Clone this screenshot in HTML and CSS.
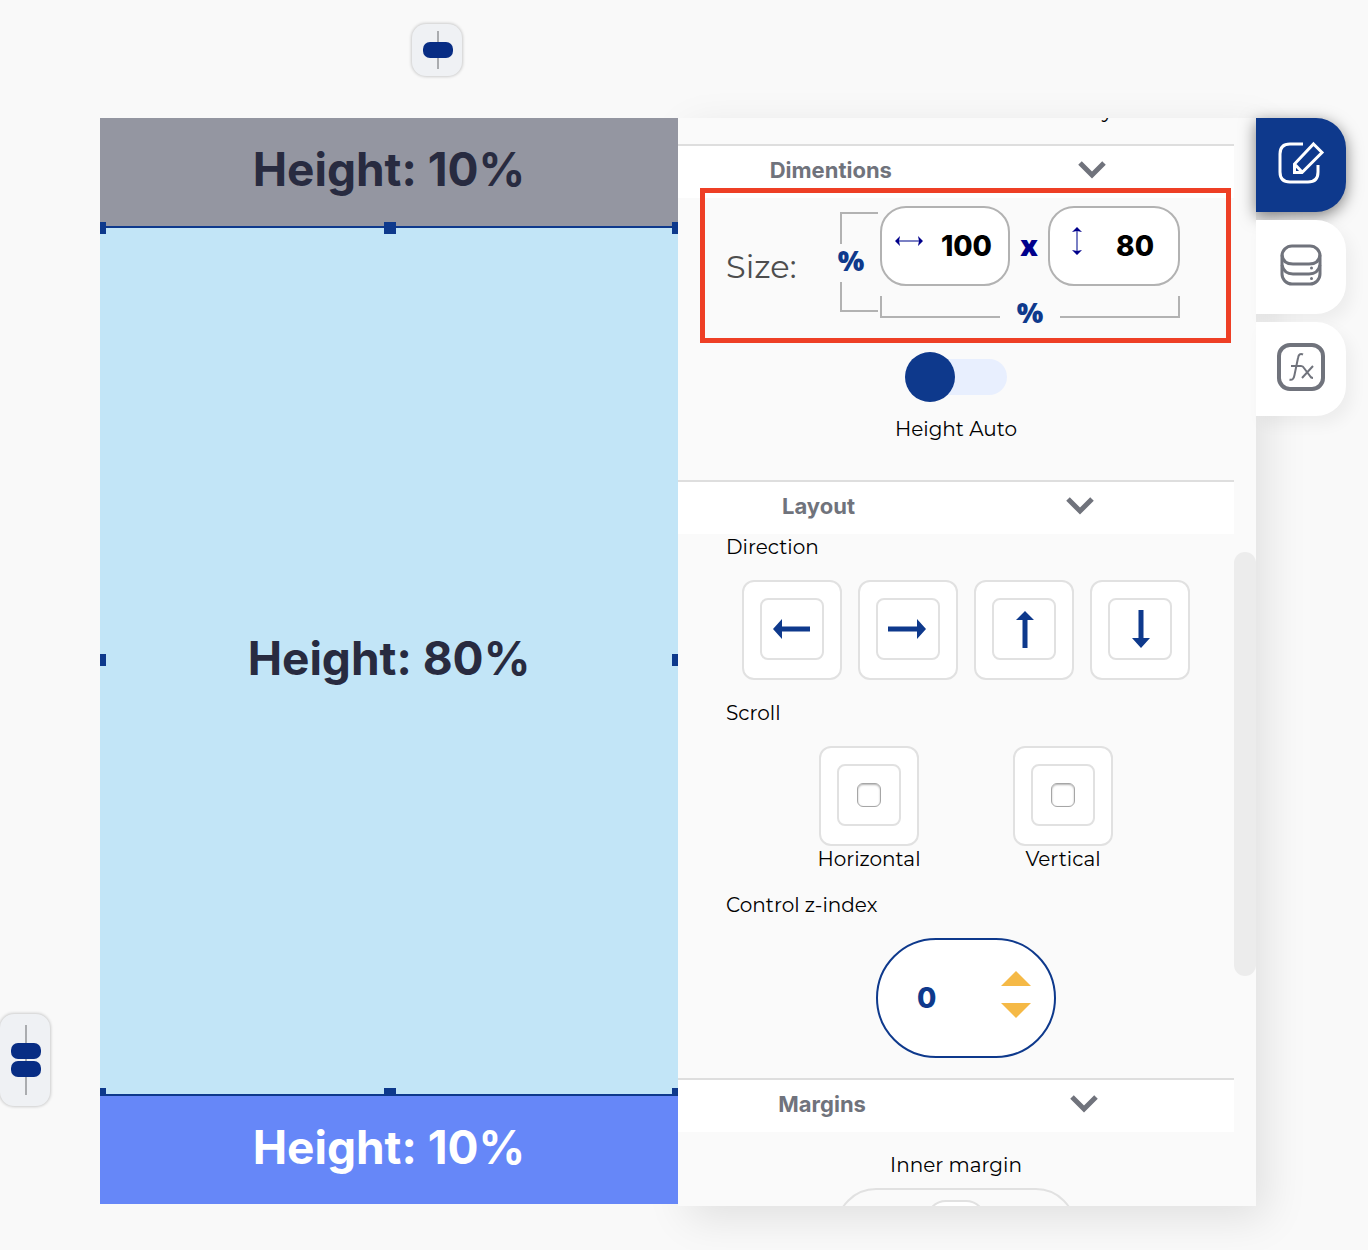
FILE: index.html
```html
<!DOCTYPE html>
<html lang="en">
<head>
<meta charset="utf-8">
<meta name="viewport" content="width=device-width, initial-scale=1">
<title>Container properties</title>
<link rel="stylesheet" href="styles.css">
</head>
<body>
<header class="topbar">
  <button class="guide" type="button" aria-label="Align horizontally">
    <svg width="30" height="38" viewBox="0 0 30 38"><path class="guide-line" d="M15 0V38"/><rect class="guide-pill" y="11" width="30" height="16" rx="7"/></svg>
  </button>
</header>
<main class="workspace">
  <aside class="rail">
    <button class="guide guide-tall" type="button" aria-label="Distribute vertically">
      <svg width="30" height="70" viewBox="0 0 30 70"><path class="guide-line" d="M15 0V70"/><rect class="guide-pill" y="18" width="30" height="16" rx="7"/><rect class="guide-pill" y="36" width="30" height="16" rx="7"/></svg>
    </button>
  </aside>

  <section class="canvas" aria-label="Canvas">
    <div class="block block-head">Height: 10%</div>
    <div class="block block-body">Height: 80%
      <i class="handle top left"></i><i class="handle top center"></i><i class="handle top right"></i>
      <i class="handle middle left"></i><i class="handle middle right"></i>
      <i class="handle bottom left"></i><i class="handle bottom center"></i><i class="handle bottom right"></i>
    </div>
    <div class="block block-foot">Height: 10%</div>
  </section>

  <section class="panel" aria-label="Properties">
    <div class="panel-content">
      <div class="scrolled-row">y</div>

      <h2 class="section-head"><span>Dimentions</span>
        <button class="chevron" type="button" aria-label="Collapse Dimentions"><svg width="26" height="18" viewBox="0 0 26 18"><path d="M1 2 13 14 25 2"/></svg></button>
      </h2>
      <div class="dimensions">
        <div class="size-row">
          <label class="size-label" for="width">Size:</label>
          <div class="side-bracket"><i></i><span>%</span><i></i></div>
          <div class="size-main">
            <div class="fields">
              <label class="field field-width">
                <svg width="28" height="12" viewBox="0 0 28 12"><path class="thin" d="M3 6H25"/><path class="tip" d="M0 6 5 1 4 6 5 11ZM28 6 23 1 24 6 23 11Z"/></svg>
                <input id="width" type="text" value="100" aria-label="Width">
              </label>
              <span class="times">x</span>
              <label class="field field-height">
                <svg width="12" height="28" viewBox="0 0 12 28"><path class="thin" d="M6 3V25"/><path class="tip" d="M6 0 1 5 6 4 11 5ZM6 28 1 23 6 24 11 23Z"/></svg>
                <input type="text" value="80" aria-label="Height">
              </label>
            </div>
            <div class="base-bracket"><i></i><span>%</span><i></i></div>
          </div>
        </div>
        <div class="highlight"></div>
        <label class="auto"><input class="switch" type="checkbox"><span>Height Auto</span></label>
      </div>

      <h2 class="section-head"><span>Layout</span>
        <button class="chevron" type="button" aria-label="Collapse Layout"><svg width="26" height="18" viewBox="0 0 26 18"><path d="M1 2 13 14 25 2"/></svg></button>
      </h2>
      <div class="layout">
        <p class="caption">Direction</p>
        <div class="tiles">
          <button class="tile" type="button" aria-label="Left"><span class="tile-inner"><svg width="38" height="38" viewBox="0 0 38 38"><path d="M0 19 9 9V16.500H37V21.500H9V29Z"/></svg></span></button>
          <button class="tile" type="button" aria-label="Right"><span class="tile-inner"><svg width="38" height="38" viewBox="0 0 38 38"><path d="M37 19 28 9V16.500H-1V21.500H28V29Z"/></svg></span></button>
          <button class="tile" type="button" aria-label="Up"><span class="tile-inner"><svg width="38" height="38" viewBox="0 0 38 38"><path d="M20 1 29 10H22.500V38H17.500V10H11Z"/></svg></span></button>
          <button class="tile" type="button" aria-label="Down"><span class="tile-inner"><svg width="38" height="38" viewBox="0 0 38 38"><path d="M20 38 29 28H22.500V0H17.500V28H11Z"/></svg></span></button>
        </div>
        <p class="caption">Scroll</p>
        <div class="tiles tiles-scroll">
          <label class="choice"><span class="tile"><span class="tile-inner"><input class="check" type="checkbox"></span></span>Horizontal</label>
          <label class="choice"><span class="tile"><span class="tile-inner"><input class="check" type="checkbox"></span></span>Vertical</label>
        </div>
        <label class="caption" for="z">Control z-index</label>
        <div class="stepper">
          <input id="z" type="text" value="0">
          <div class="steps">
            <button type="button" aria-label="Increase"><svg width="30" height="15" viewBox="0 0 30 15"><path d="M15 0 30 15H0Z"/></svg></button>
            <button type="button" aria-label="Decrease"><svg width="30" height="15" viewBox="0 0 30 15"><path d="M15 15 30 0H0Z"/></svg></button>
          </div>
        </div>
      </div>

      <h2 class="section-head"><span>Margins</span>
        <button class="chevron" type="button" aria-label="Collapse Margins"><svg width="26" height="18" viewBox="0 0 26 18"><path d="M1 2 13 14 25 2"/></svg></button>
      </h2>
      <div class="margins">
        <p>Inner margin</p>
        <div class="margin-box"><div class="margin-value"></div></div>
      </div>
    </div>
    <div class="scrollbar"><i class="space-above"></i><i class="thumb"></i><i class="space-below"></i></div>
  </section>

  <nav class="tabs">
    <button class="tab tab-active" type="button" aria-label="Edit">
      <svg width="48" height="48" viewBox="0 0 48 48"><path d="M26 5H13Q3 5 3 15V33Q3 43 13 43H31Q41 43 41 33V26"/><path d="M36.500 5 45 13.500 25 33.500H17.500V25ZM17.500 25 25.500 33.500"/></svg>
    </button>
    <button class="tab" type="button" aria-label="Data">
      <svg width="48" height="48" viewBox="0 0 48 48"><rect x="5" y="5" width="38" height="38" rx="10"/><path d="M5 14Q6 23 16 23H32Q42 23 43 14M5 24Q7 33 16 33H32Q41 33 43 24"/><g class="dots"><circle cx="34.500" cy="27" r="1.500"/><circle cx="34.500" cy="37.500" r="1.500"/></g></svg>
    </button>
    <button class="tab" type="button" aria-label="Functions">
      <svg width="48" height="48" viewBox="0 0 48 48"><rect class="frame" x="2" y="2" width="44" height="44" rx="11"/><path class="fx" d="M12.500 36.500Q16.500 38 17.500 32L21 15Q22 9.500 26 11.500M14 23H24Q26 23 27 25L33 33Q34 35 36 35M36 23 25 35"/></svg>
    </button>
  </nav>
</main>
</body>
</html>
```
FILE: styles.css
```css
* { box-sizing: border-box; }

:root {
  --navy: #0e398c;
  --gray: #70737c;
  --line: #e1e1e1;
  --bracket: #b2b2b2;
}

body {
  min-height: 100vh;
  margin: 0;
  background: #f9f9f9;
  color: #000;
  font: 20px/24px Montserrat, Inter, sans-serif;
}

button {
  margin: 0;
  padding: 0;
  border: 0;
  background: none;
  color: inherit;
  font: inherit;
  cursor: pointer;
}

input { margin: 0; font: inherit; }
p { margin: 0; }
svg { display: block; flex: none; overflow: visible; }

.topbar {
  height: 118px;
  padding: 24px 0 0 412px;
}

.guide {
  display: flex;
  align-items: center;
  justify-content: center;
  width: 50px;
  height: 52px;
  padding-left: 2px;
  border-radius: 14px;
  background: #eff1f4;
  box-shadow: 0 0 3px 1px rgba(0, 0, 0, 0.18);
}

.guide-tall { height: 92px; }
.guide-line { stroke: #aaacaf; stroke-width: 2; }
.guide-pill { fill: #082d84; }

.workspace {
  display: grid;
  grid-template-columns: 100px 1fr 1fr 90px;
  height: calc(100vh - 162px);
  min-height: 600px;
  margin-bottom: 44px;
  padding-right: 22px;
}

.rail {
  display: flex;
  align-items: flex-end;
  padding-bottom: 100px;
}

/* Canvas */
.canvas {
  position: relative;
  z-index: 1;
  display: grid;
  grid-template-rows: 108px 1fr 108px;
  margin-bottom: 2px;
}

.block {
  display: flex;
  align-items: center;
  justify-content: center;
  padding-bottom: 6px;
  color: #282b40;
  font: 700 46px/56px Inter, sans-serif;
}

.block-head { background: #9496a1; }

.block-body {
  position: relative;
  border: solid var(--navy);
  border-width: 2px 0;
  background: #c2e5f7;
}

.block-foot {
  position: relative;
  background: #6687f8;
  color: #fff;
}

.handle {
  position: absolute;
  width: 6px;
  height: 12px;
  background: var(--navy);
}

.handle.top { top: -6px; }
.handle.middle { top: calc(50% - 7px); }
.handle.bottom { bottom: -6px; }
.handle.left { left: 0; }
.handle.right { right: 0; }
.handle.center { left: calc(50% - 5px); width: 12px; }

/* Properties panel */
.panel {
  display: flex;
  min-height: 0;
  overflow: hidden;
  background: #fafafa;
  box-shadow: 10px 12px 40px rgba(0, 0, 0, 0.1);
}

.panel-content { flex: 1; min-width: 0; }

.scrollbar {
  display: flex;
  flex-direction: column;
  width: 22px;
}

.space-above { flex: 434; }
.thumb { flex: 424; border-radius: 11px; background: #ececec; }
.space-below { flex: 230; }

/* Row scrolled almost out of view above the first section */
.scrolled-row {
  height: 45px;
  margin-top: -19px;
  padding-left: 424px;
}

.section-head {
  display: flex;
  align-items: center;
  justify-content: space-around;
  height: 54px;
  margin: 0;
  padding-bottom: 4px;
  border-top: 2px solid #dedede;
  background: #fff;
  color: var(--gray);
  font: 700 22px/28px Inter, sans-serif;
}

.chevron { width: 67px; padding-left: 4px; }
.chevron path { fill: none; stroke: var(--gray); stroke-width: 5; }

.dimensions {
  position: relative;
  height: 282px;
  padding-top: 8px;
}

.size-row {
  display: flex;
  padding-left: 48px;
}

.size-label {
  width: 114px;
  padding-top: 41px;
  color: #4d4d4d;
  font-size: 32px;
  line-height: 40px;
}

.side-bracket {
  display: flex;
  flex-direction: column;
  width: 38px;
  height: 100px;
  margin: 6px 2px 0 0;
}

.side-bracket i {
  height: 32px;
  border: solid var(--bracket);
  border-width: 2px 0 0 2px;
}

.side-bracket i:last-child { height: 30px; border-width: 0 0 2px 2px; }

.side-bracket span,
.base-bracket span,
.times {
  color: var(--navy);
  font: 800 28px/32px "Open Sans", sans-serif;
}

.side-bracket span {
  display: flex;
  justify-content: center;
  width: 22px;
  height: 38px;
}

.size-main { width: 300px; }
.fields { display: flex; }

.field {
  display: flex;
  align-items: center;
  justify-content: space-between;
  width: 130px;
  height: 80px;
  padding: 0 16px 0 13px;
  border: 2px solid var(--bracket);
  border-radius: 26px;
  background: #fff;
}

.field-height { width: 132px; padding: 0 24px 0 21px; }

.field svg { margin-bottom: 10px; }

.field input {
  width: 60px;
  padding: 0;
  border: 0;
  background: none;
  color: #000;
  font: 800 28px/36px Inter, sans-serif;
  text-align: right;
}

.thin { stroke: #7a80c4; stroke-width: 2; }
.tip { fill: #00008b; }

.size-main .times {
  flex: 1;
  color: #00008b;
  line-height: 78px;
  text-align: center;
}

.base-bracket {
  display: flex;
  height: 22px;
  margin-top: 10px;
}

.base-bracket i {
  width: 120px;
  border: solid var(--bracket);
  border-width: 0 0 2px 2px;
}

.base-bracket i:last-child { border-width: 0 2px 2px 0; }

.base-bracket span { flex: 1; text-align: center; }

.highlight {
  position: absolute;
  inset: -10px 3px 137px 22px;
  border: 5px solid #ee3f25;
  pointer-events: none;
}

.auto {
  display: flex;
  flex-direction: column;
  align-items: center;
  gap: 22px;
  margin-top: 41px;
}

.switch {
  position: relative;
  appearance: none;
  width: 102px;
  height: 36px;
  border-radius: 18px;
  background: #e8effe;
}

.switch::before {
  content: "";
  position: absolute;
  top: -7px;
  left: 0;
  width: 50px;
  height: 50px;
  border-radius: 50%;
  background: var(--navy);
}

.layout {
  height: 544px;
  padding: 0 28px 0 48px;
}

.caption { display: block; line-height: 26px; }

.tiles {
  display: flex;
  justify-content: center;
  gap: 16px;
  margin: 20px 0;
}

.tiles-scroll { gap: 94px; }

.tile {
  display: flex;
  justify-content: center;
  align-items: flex-start;
  width: 100px;
  height: 100px;
  padding-top: 16px;
  border: 2px solid var(--line);
  border-radius: 12px;
  background: #fff;
}

.tile-inner {
  display: flex;
  align-items: center;
  justify-content: center;
  width: 64px;
  height: 62px;
  border: 2px solid var(--line);
  border-radius: 8px;
}

.tile path { fill: var(--navy); }

.choice {
  display: flex;
  flex-direction: column;
  align-items: center;
  width: 100px;
  white-space: nowrap;
  line-height: 26px;
}

.check {
  appearance: none;
  width: 24px;
  height: 24px;
  border: 1px solid #a6a6a6;
  border-radius: 6px;
  background: #fff;
  box-shadow: inset 0 1px 2px rgba(0, 0, 0, 0.3);
}

.stepper {
  display: flex;
  align-items: center;
  justify-content: space-between;
  width: 180px;
  height: 120px;
  margin: 20px auto 0;
  padding: 0 23px 0 39px;
  border: 2px solid var(--navy);
  border-radius: 60px;
  background: #fff;
}

.stepper input {
  width: 50px;
  padding: 0;
  border: 0;
  background: none;
  color: var(--navy);
  font: 800 28px/36px Inter, sans-serif;
}

.steps {
  display: grid;
  gap: 17px;
  padding-bottom: 8px;
}

.steps path { fill: #f5b946; }

.margins { padding-top: 21px; text-align: center; }

.margin-box {
  width: 240px;
  height: 120px;
  margin: 11px auto 0;
  padding-top: 10px;
  border: 2px solid var(--line);
  border-radius: 40px;
}

.margin-value {
  width: 60px;
  height: 40px;
  margin: 0 auto;
  border: 2px solid var(--line);
  border-radius: 20px;
  background: #fff;
}

/* Side tabs */
.tabs {
  display: flex;
  flex-direction: column;
  gap: 8px;
}

.tab {
  position: relative;
  display: flex;
  align-items: center;
  justify-content: center;
  height: 94px;
  padding-bottom: 4px;
  border-radius: 0 30px 30px 0;
  background: #fff;
  color: var(--gray);
  box-shadow: 6px 8px 16px rgba(0, 0, 0, 0.05);
}

.tab-active {
  background: var(--navy);
  color: #fff;
  box-shadow: 0 4px 16px rgba(0, 0, 0, 0.5);
}

.tab svg {
  fill: none;
  stroke: currentColor;
  stroke-width: 3;
}

.tab .dots { fill: currentColor; stroke: none; }
.tab .frame { stroke-width: 4; }
.tab .fx { stroke-width: 2; }
```
